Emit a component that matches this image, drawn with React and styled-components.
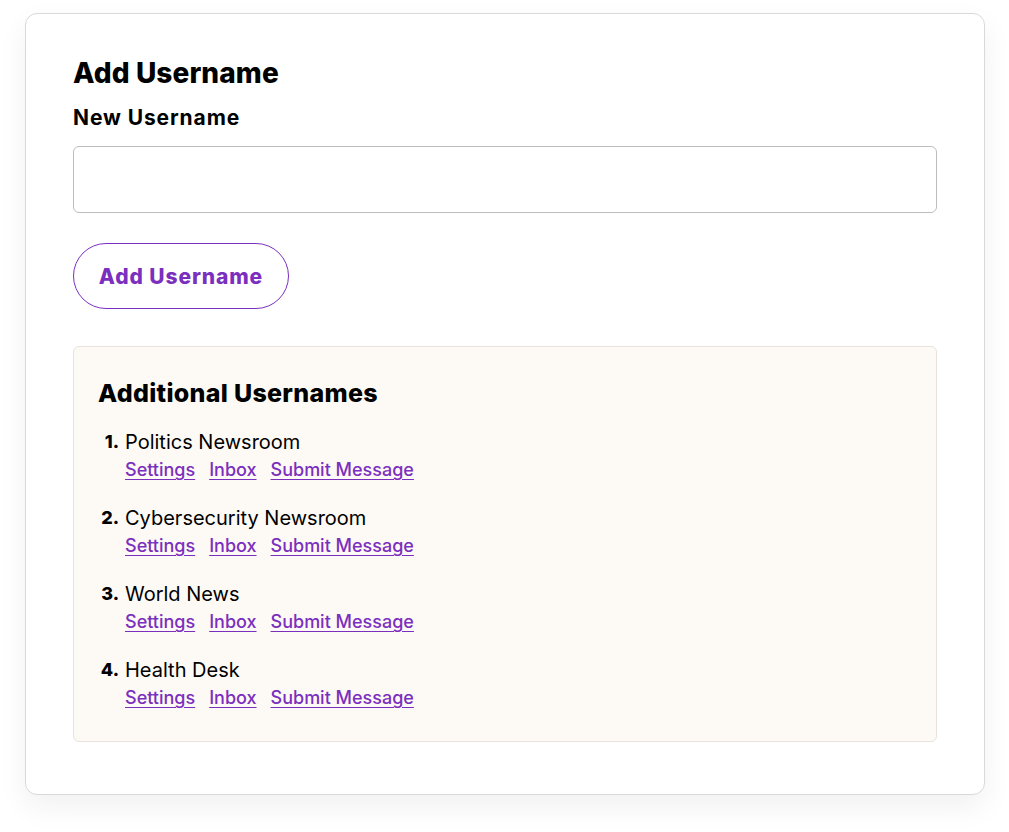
import styled, { createGlobalStyle } from "styled-components";

const GlobalStyle = createGlobalStyle`
    body {
        margin: 0;
        background: #ffffff;
        font-family: Inter, "Liberation Sans", sans-serif;
        color: #000;
    }
`;

const usernames = [
    "Politics Newsroom",
    "Cybersecurity Newsroom",
    "World News",
    "Health Desk",
];

export default function App() {
    return (
        <>
            <GlobalStyle />
            <Page>
                <Card>
                    <Title>Add Username</Title>
                    <Label htmlFor="new-username">New Username</Label>
                    <Input id="new-username" type="text" />
                    <AddButton>Add Username</AddButton>
                    <ListBox>
                        <ListTitle>Additional Usernames</ListTitle>
                        <List>
                            {usernames.map((name, index) => (
                                <Item key={name}>
                                    <Number>{index + 1}.</Number>
                                    <div>
                                        <Name>{name}</Name>
                                        <Links>
                                            <a href="#settings">Settings</a>
                                            <a href="#inbox">Inbox</a>
                                            <a href="#submit">Submit Message</a>
                                        </Links>
                                    </div>
                                </Item>
                            ))}
                        </List>
                    </ListBox>
                </Card>
            </Page>
        </>
    );
}

const Page = styled.div`
    padding: 13px 24px 38px 25px;
`;

const Card = styled.div`
    background: #fff;
    border: 1px solid #d9d9d9;
    border-radius: 12px;
    box-shadow: 0 12px 30px rgba(0, 0, 0, 0.06);
    padding: 42px 47px 52px 47px;
    display: flex;
    flex-direction: column;
`;

const Title = styled.h1`
    margin: 0;
    font-size: 28px;
    font-weight: 800;
    line-height: 34px;
    letter-spacing: 0.1px;
`;

const Label = styled.label`
    margin-top: 15px;
    font-size: 21px;
    font-weight: 700;
    line-height: 26px;
    letter-spacing: 0.9px;
`;

const Input = styled.input`
    margin-top: 15px;
    height: 67px;
    box-sizing: border-box;
    border: 1px solid #bdbdbd;
    border-radius: 6px;
    font-size: 18px;
    padding: 0 16px;
    outline: none;
`;

const AddButton = styled.button`
    margin-top: 30px;
    align-self: flex-start;
    width: 216px;
    height: 66px;
    padding: 0;
    border: 1px solid #7b2fbe;
    border-radius: 33px;
    background: #fff;
    color: #7b2fbe;
    font-family: Inter, "Liberation Sans", sans-serif;
    font-size: 21px;
    font-weight: 800;
    letter-spacing: 0.9px;
    cursor: pointer;
`;

const ListBox = styled.section`
    margin-top: 37px;
    background: #fdfaf5;
    border: 1px solid #e8e3da;
    border-radius: 6px;
    padding: 30px 24px 29px 24px;
`;

const ListTitle = styled.h2`
    margin: 0;
    font-size: 25px;
    font-weight: 800;
    line-height: 32px;
    letter-spacing: 0.3px;
`;

const List = styled.ol`
    list-style: none;
    margin: 19px 0 0 0;
    padding: 0;
    display: flex;
    flex-direction: column;
    gap: 20px;
`;

const Item = styled.li`
    display: grid;
    grid-template-columns: 21px 1fr;
    column-gap: 6px;
`;

const Number = styled.span`
    text-align: right;
    font-size: 18px;
    font-weight: 800;
    line-height: 28px;
`;

const Name = styled.div`
    font-size: 20px;
    line-height: 28px;
`;

const Links = styled.div`
    display: flex;
    gap: 14px;

    a {
        color: #7b2fbe;
        font-size: 18px;
        line-height: 28px;
        font-weight: 500;
        text-decoration: underline;
        text-underline-offset: 3px;
    }
`;
